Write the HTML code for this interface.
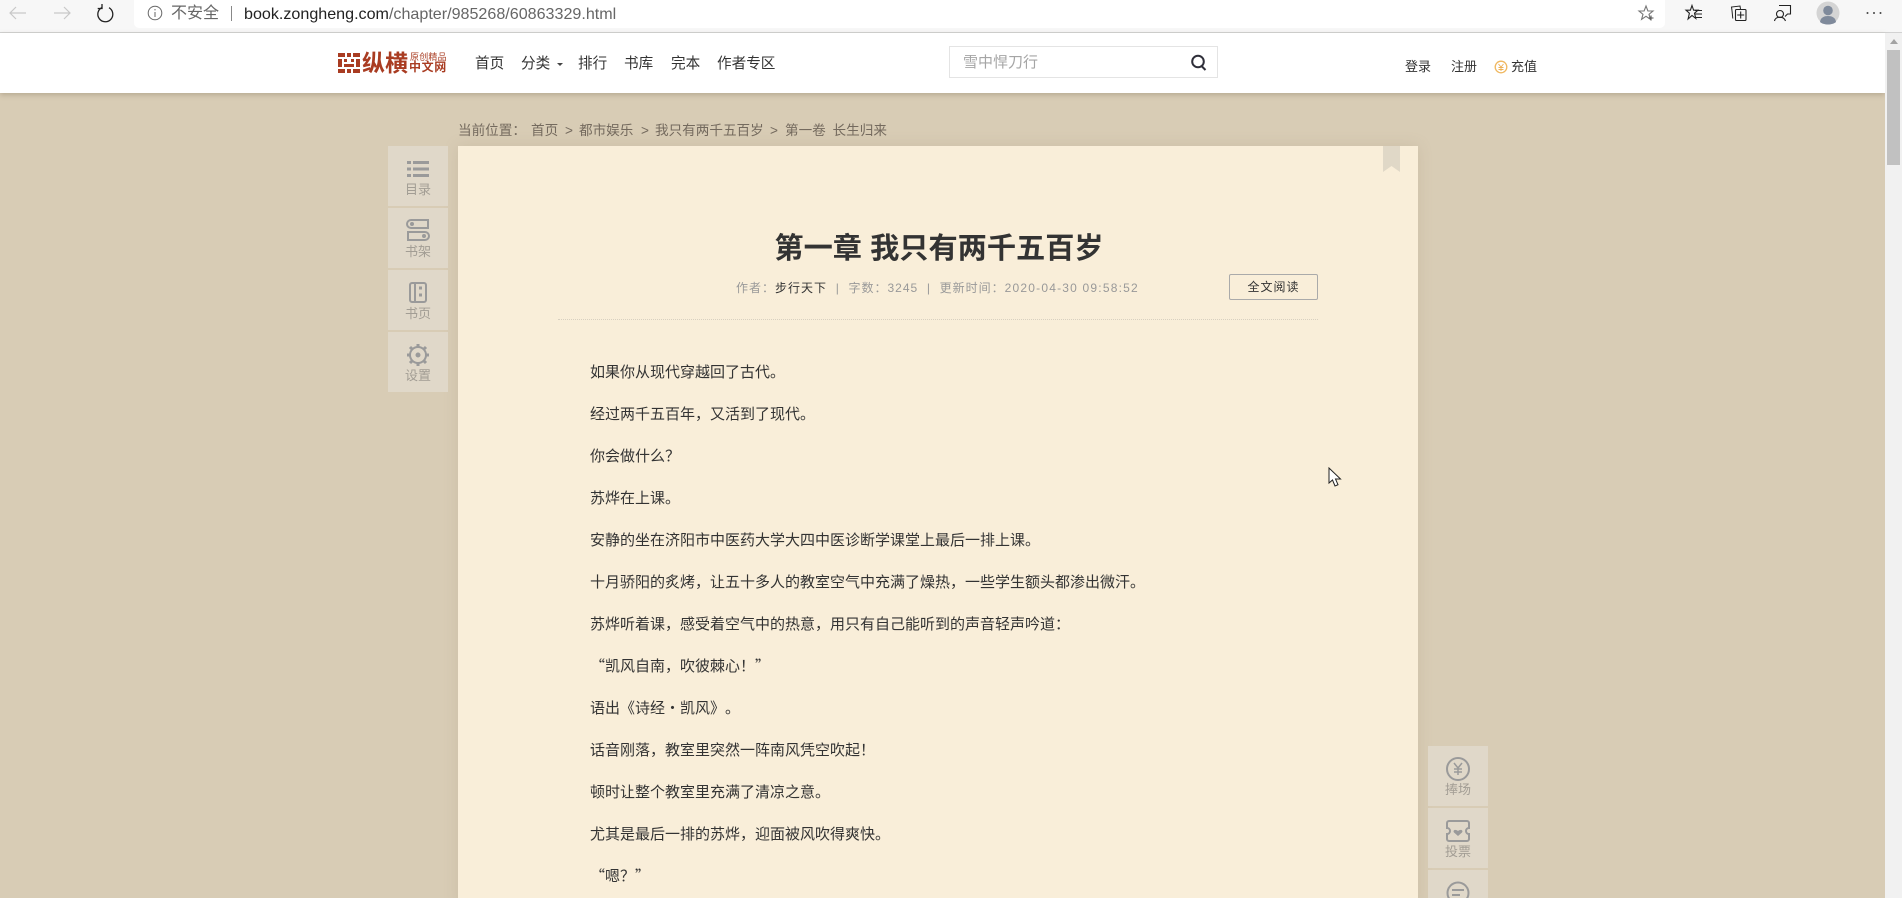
<!DOCTYPE html>
<html lang="zh-CN"><head><meta charset="utf-8"><title>第一章 我只有两千五百岁</title>
<style>
*{box-sizing:border-box;margin:0;padding:0}
html,body{width:1902px;height:898px;overflow:hidden;background:#d8ccb5}
body{position:relative;font-family:"Liberation Sans","Noto Sans CJK SC",sans-serif;color:#333}
.a{position:absolute;white-space:nowrap}
#bar{left:0;top:0;width:1902px;height:33px;background:#f7f7f7;border-bottom:1px solid #d2d2d2}
#addr{left:134px;top:0;width:1531px;height:28px;background:#fff;border-radius:0 0 5px 5px}
#head{left:0;top:33px;width:1885px;height:60px;background:#fff;box-shadow:0 2px 5px rgba(120,105,80,.35)}
.n{font-size:14.6px;line-height:20px;top:54px;color:#333}
.r{font-size:13px;line-height:18px;top:58px;color:#333}
.b{font-size:13.6px;line-height:20px;top:121px;color:#746a5e}
#paper{left:458px;top:146px;width:960px;height:760px;background:#f9eed9;box-shadow:0 0 14px rgba(150,130,100,.18)}
.t{position:absolute;left:388px;width:60px;height:60px;background:#e0d8c9}
.t span{position:absolute;left:0;width:60px;text-align:center;font-size:13px;line-height:16px;color:#a29d94;top:36px}
.t svg{position:absolute;left:0;top:0}
.p{position:absolute;left:590px;font-size:15px;line-height:24px;color:#333;white-space:nowrap;font-family:"WenQuanYi Zen Hei","Noto Sans CJK SC",sans-serif;text-spacing-trim:space-all}
</style></head><body>
<div class="a" id="bar"></div>
<div class="a" id="addr"></div>
<svg class="a" style="left:0;top:0" width="134" height="30" fill="none">
<path d="M26 13H10M16 7l-6 6 6 6" stroke="#c8c8c8" stroke-width="1.2"/>
<path d="M54 13h16M64 7l6 6-6 6" stroke="#c8c8c8" stroke-width="1.2"/>
<path d="M102 7.5a7.5 7.5 0 1 0 7 .2M102 4v4.5h-4.3" stroke="#222" stroke-width="1.3"/>
</svg>
<svg class="a" style="left:146px;top:4px" width="18" height="18" fill="none"><circle cx="9" cy="9" r="6.8" stroke="#666"/><path d="M9 8v5M9 5v1.4" stroke="#666"/></svg>
<div class="a" style="left:171px;top:3px;font-size:16px;line-height:22px;color:#666">不安全</div>
<div class="a" style="left:231px;top:6px;width:1px;height:15px;background:#888"></div>
<div class="a" style="left:244px;top:3px;font-size:16.1px;line-height:22px;color:#666"><span style="color:#222">book.zongheng.com</span>/chapter/985268/60863329.html</div>
<svg class="a" style="left:1630px;top:0" width="272" height="32" fill="none" stroke="#222" stroke-width="1.1">
<path d="M16 6l1.900 5h5.100l-4 3.300 1.400 5-4.400-3-4.400 3 1.400-5-4-3.300h5.100z" stroke="#777"/><path d="M18.500 18h5M21 15.500v5" stroke="#555"/>
<path d="M62 5.500l1.600 4.700h4.400l-3.500 3 1.300 5.300-3.800-3-3.900 3.500 1.300-5.800-3.400-3h4.400z"/><path d="M65 10.500h7M65 14h7M65 17.500h7"/>
<path d="M102 10.500l-.5-3.500 8.500-1 .5 3M102 10.500l.8 8" stroke-width="1"/><rect x="105.500" y="9.500" width="10.500" height="11" rx="1"/><path d="M110.700 11.500v7M107.200 15h7"/>
<circle cx="150" cy="14" r="3.500"/><path d="M144.500 21c.5-2.700 2.500-3.800 5.500-3.800s4.500 1 5.500 3.800M149 5.500h11.500v8.500h-3l-2.500 2.500"/>
<circle cx="198" cy="13" r="11.500" fill="#d4d4d4" stroke="none"/><circle cx="198" cy="10.500" r="4.800" fill="#7f8a9b" stroke="none"/><path d="M190 22c.6-4.500 4-6 8-6s7.400 1.500 8 6c-2 1.800-5 2.500-8 2.500s-6-.7-8-2.500z" fill="#7f8a9b" stroke="none"/>
<g fill="#444" stroke="none"><circle cx="237.500" cy="13" r="1"/><circle cx="244" cy="13" r="1"/><circle cx="250.500" cy="13" r="1"/></g>
</svg>

<div class="a" id="head"></div>
<svg class="a" style="left:338px;top:53px" width="22" height="20"><g fill="#a93c22"><rect width="7" height="4"/><rect x="9" width="4" height="4"/><rect x="15" width="7" height="4"/><rect y="6" width="4" height="8"/><rect x="6" y="6" width="3" height="3"/><rect x="13" y="6" width="3" height="3"/><rect x="18" y="6" width="4" height="8"/><rect x="6" y="11" width="10" height="3"/><rect y="16" width="7" height="4"/><rect x="9" y="16" width="4" height="4"/><rect x="15" y="16" width="7" height="4"/></g></svg>
<div class="a" style="left:362px;top:49px;font-size:23px;line-height:28px;font-weight:700;color:#a93c22;letter-spacing:0">纵横</div>
<div class="a" style="left:410px;top:52px;font-size:9px;line-height:10px;color:#a93c22;letter-spacing:.2px">原创精品</div>
<div class="a" style="left:409px;top:60px;font-size:12px;line-height:14px;font-weight:700;color:#a93c22;letter-spacing:.6px">中文网</div>
<div class="a n" style="left:475px">首页</div>
<div class="a n" style="left:521px">分类</div>
<div class="a" style="left:557px;top:63px;border:3px solid transparent;border-top:3px solid #444"></div>
<div class="a n" style="left:578px">排行</div>
<div class="a n" style="left:624px">书库</div>
<div class="a n" style="left:671px">完本</div>
<div class="a n" style="left:717px">作者专区</div>
<div class="a" style="left:949px;top:46px;width:269px;height:32px;border:1px solid #e4e4e4"></div>
<div class="a" style="left:963px;top:52px;font-size:15px;line-height:22px;color:#a5a5a5">雪中悍刀行</div>
<svg class="a" style="left:1190px;top:54px" width="18" height="18" fill="none" stroke="#2f2f3a" stroke-width="2"><circle cx="8" cy="7.500" r="5.800"/><path d="M11.500 12l4 4"/></svg>
<div class="a r" style="left:1405px">登录</div>
<div class="a r" style="left:1451px">注册</div>
<svg class="a" style="left:1494px;top:60px" width="14" height="14" fill="none"><circle cx="7" cy="7" r="5.800" stroke="#f0b860" stroke-width="1.300"/><path d="M4.500 4L7 7l2.500-3M4.500 7.500h5M4.500 9.500h5M7 7v4" stroke="#eeb055" stroke-width=".9"/></svg>
<div class="a r" style="left:1511px">充值</div>

<div class="a b" style="left:458px">当前位置：</div>
<div class="a b" style="left:531px">首页</div>
<div class="a b" style="left:565px">&gt;</div>
<div class="a b" style="left:579px">都市娱乐</div>
<div class="a b" style="left:641px">&gt;</div>
<div class="a b" style="left:655px">我只有两千五百岁</div>
<div class="a b" style="left:770px">&gt;</div>
<div class="a b" style="left:785px;word-spacing:3px">第一卷 长生归来</div>

<div class="a" id="paper"></div>
<svg class="a" style="left:1383px;top:146px" width="17" height="26"><path d="M0 0h17v26l-8.500-6L0 26z" fill="#e0d8c7"/></svg>

<div class="t" style="top:146px"><svg width="60" height="34" fill="#9a9a9a"><rect x="19" y="15" width="4" height="3"/><rect x="25" y="15" width="16" height="3"/><rect x="19" y="21.500" width="4" height="3"/><rect x="25" y="21.500" width="16" height="3"/><rect x="19" y="28" width="4" height="3"/><rect x="25" y="28" width="16" height="3"/></svg><span>目录</span></div>
<div class="t" style="top:208px"><svg width="60" height="36" fill="none" stroke="#9a9a9a" stroke-width="2"><path d="M40 12H23a4 4 0 0 0 0 8h17z"/><path d="M20 24h17a4 4 0 0 1 0 8H20z"/><circle cx="24" cy="16" r="1" fill="#9a9a9a"/><circle cx="36" cy="28" r="1" fill="#9a9a9a"/></svg><span>书架</span></div>
<div class="t" style="top:270px"><svg width="60" height="36" fill="none" stroke="#9a9a9a" stroke-width="2"><rect x="22" y="13" width="16" height="19" rx="2"/><path d="M27 13v19"/><path d="M31 18h3M31 25h3" stroke-width="3"/></svg><span>书页</span></div>
<div class="t" style="top:332px"><svg width="60" height="36" fill="none" stroke="#9a9a9a"><circle cx="30" cy="23" r="8" stroke-width="2"/><circle cx="30" cy="23" r="2" fill="#9a9a9a"/><path d="M30 12v3M30 31v3M19 23h3M38 23h3M22 15l2 2M36 29l2 2M38 15l-2 2M24 29l-2 2" stroke-width="3"/></svg><span>设置</span></div>

<div class="a" style="left:439px;width:1000px;top:230px;text-align:center;font-size:29.2px;line-height:38px;font-weight:700;color:#333">第一章 我只有两千五百岁</div>
<div class="a" style="left:736px;top:279px;font-size:12px;line-height:18px;letter-spacing:1px;color:#999">作者：<span style="color:#333">步行天下</span>&nbsp; | &nbsp;字数：3245&nbsp; | &nbsp;更新时间：<span style="letter-spacing:1.2px">2020-04-30 09:58:52</span></div>
<div class="a" style="left:1229px;top:274px;width:89px;height:26px;border:1px solid #aaa;border-radius:2px;text-align:center;font-size:12px;line-height:24px;letter-spacing:1px;color:#333">全文阅读</div>
<div class="a" style="left:558px;top:319px;width:760px;border-top:1px dotted #d8d0c0"></div>

<p class="p" style="top:360px">如果你从现代穿越回了古代。</p>
<p class="p" style="top:402px">经过两千五百年，又活到了现代。</p>
<p class="p" style="top:444px">你会做什么？</p>
<p class="p" style="top:486px">苏烨在上课。</p>
<p class="p" style="top:528px">安静的坐在济阳市中医药大学大四中医诊断学课堂上最后一排上课。</p>
<p class="p" style="top:570px">十月骄阳的炙烤，让五十多人的教室空气中充满了燥热，一些学生额头都渗出微汗。</p>
<p class="p" style="top:612px">苏烨听着课，感受着空气中的热意，用只有自己能听到的声音轻声吟道：</p>
<p class="p" style="top:654px">“凯风自南，吹彼棘心！”</p>
<p class="p" style="top:696px">语出《诗经·凯风》。</p>
<p class="p" style="top:738px">话音刚落，教室里突然一阵南风凭空吹起！</p>
<p class="p" style="top:780px">顿时让整个教室里充满了清凉之意。</p>
<p class="p" style="top:822px">尤其是最后一排的苏烨，迎面被风吹得爽快。</p>
<p class="p" style="top:864px">“嗯？”</p>

<div class="t" style="left:1428px;top:746px"><svg width="60" height="36" fill="none" stroke="#9a9a9a"><circle cx="30" cy="23" r="11" stroke-width="2"/><path d="M26 17l4 5 4-5M26 23h8M26 26h8M30 22v7" stroke-width="1.500"/></svg><span style="top:36px">捧场</span></div>
<div class="t" style="left:1428px;top:808px"><svg width="60" height="36" fill="none" stroke="#9a9a9a" stroke-width="2"><path d="M21 13h18a2 2 0 0 1 2 2v5a3 3 0 0 0 0 6v5a2 2 0 0 1-2 2H21a2 2 0 0 1-2-2v-5a3 3 0 0 0 0-6v-5a2 2 0 0 1 2-2z"/><path d="M30 28l-4-3.500c-1.500-2 1-4 4-1.500 3-2.500 5.500-.5 4 1.500z" fill="#9a9a9a" stroke="none"/></svg><span style="top:36px">投票</span></div>
<div class="t" style="left:1428px;top:870px"><svg width="60" height="36" fill="none" stroke="#9a9a9a" stroke-width="2"><circle cx="30" cy="23" r="10.500"/><path d="M24 20h12M24 25h8"/></svg></div>

<div class="a" style="left:1885px;top:33px;width:17px;height:865px;background:#f1f1f1"></div>
<div class="a" style="left:1890px;top:39px;border:4px solid transparent;border-top:0;border-bottom:5px solid #a3a3a3"></div>
<div class="a" style="left:1887px;top:50px;width:13px;height:115px;background:#c1c1c1"></div>
<svg class="a" style="left:1328px;top:467px" width="14" height="22"><path d="M1 1v15l3.500-3 2.500 6 3-1.300-2.500-5.700H12.500z" fill="#fff" stroke="#222" stroke-width="1"/></svg>
</body></html>
